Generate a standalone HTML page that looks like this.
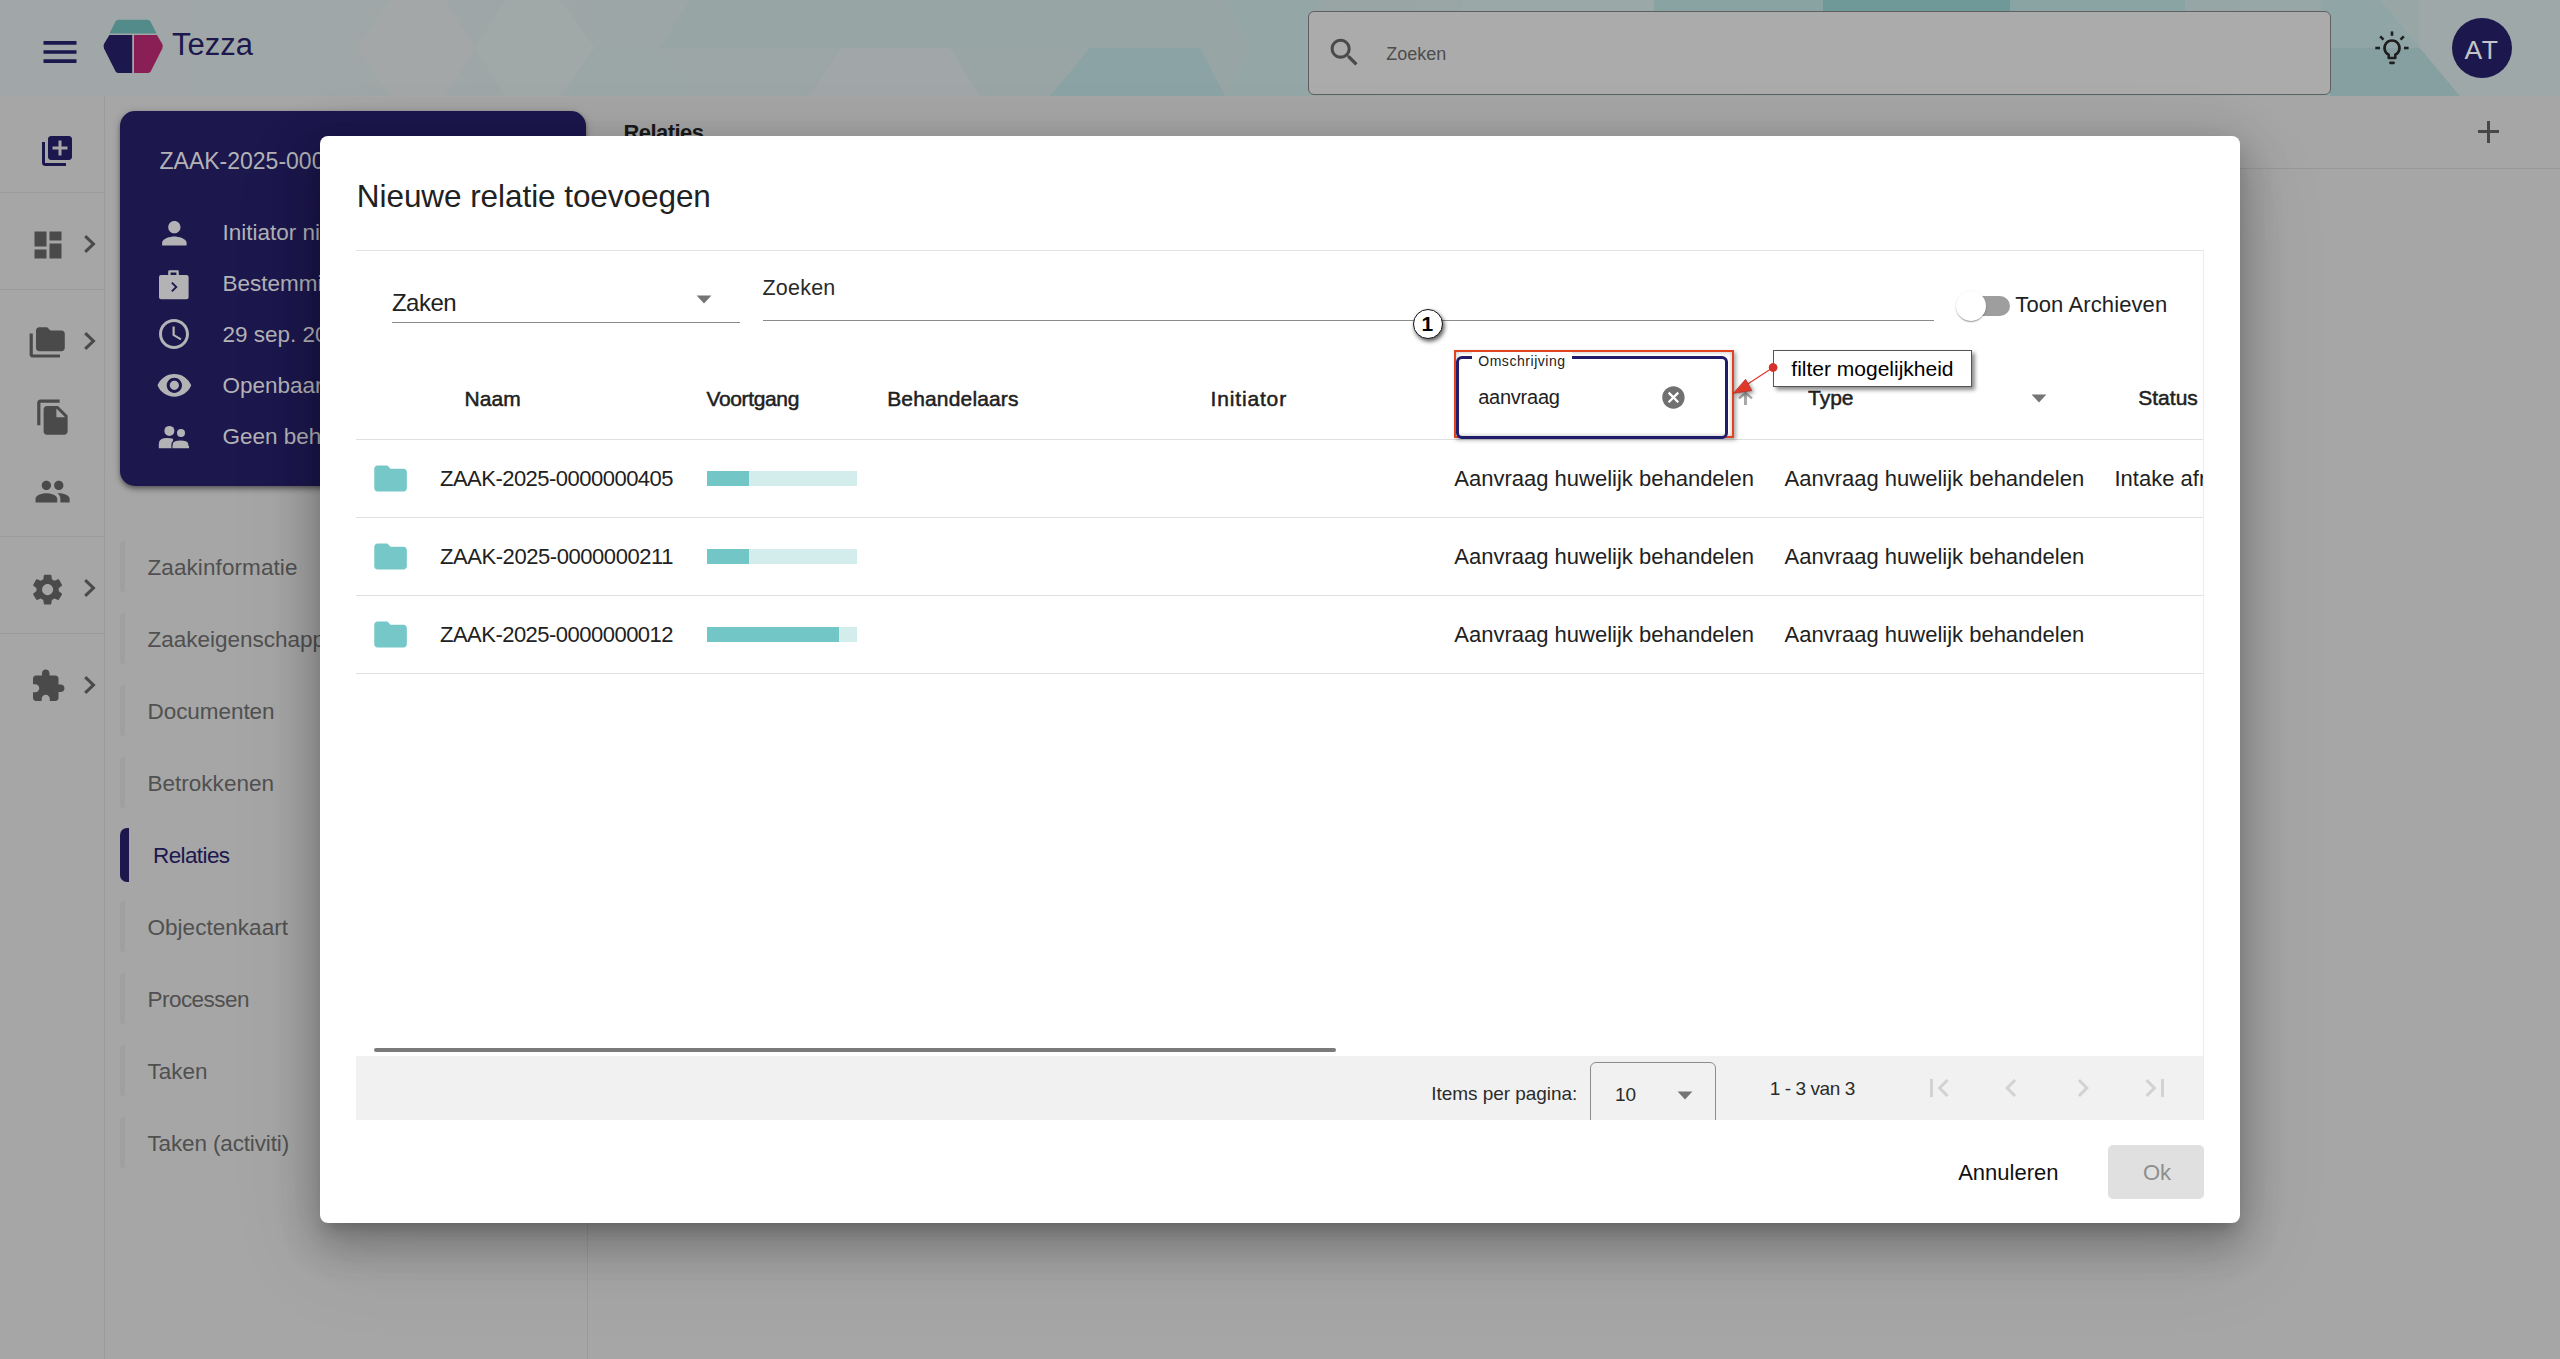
<!DOCTYPE html>
<html><head><meta charset="utf-8">
<style>
*{box-sizing:border-box;margin:0;padding:0}
html,body{width:2560px;height:1359px;overflow:hidden}
body{position:relative;background:#a6a6a6;font-family:"Liberation Sans",sans-serif;color:#212121}
.a{position:absolute}
.t{position:absolute;white-space:nowrap;line-height:1}
.i{position:absolute;overflow:visible}
.l{position:absolute;height:1px}
</style></head>
<body>
<div class="a" style="left:0;top:0;width:2560px;height:96px;overflow:hidden;background:linear-gradient(90deg,#a1a7a8 0%,#9da6a6 25%,#97a5a4 45%,#9aa6a6 60%,#94a5a5 80%,#9ba7a7 100%)"><svg width="2560" height="96" style="position:absolute;left:0;top:0">
<polygon points="690,0 1200,0 1225,48 660,48" fill="#97a5a4"/>
<polygon points="357,48 390,0 445,0 475,48 445,96 390,96" fill="#a3a7a8"/>
<polygon points="475,48 505,0 560,0 595,48 560,96 505,96" fill="#a0a8a8"/>
<polygon points="595,48 660,48 700,96 565,96" fill="#9aa7a6"/>
<polygon points="810,96 840,48 950,48 980,96" fill="#a1a6a8"/>
<polygon points="1050,96 1090,48 1200,48 1225,96" fill="#8ca3a5"/>
<polygon points="1225,0 1320,0 1320,96 1225,96 1250,48" fill="#94a6a5"/>
<polygon points="1462,0 1654,0 1654,20 1462,20" fill="#9aa8a8"/>
<polygon points="1654,0 1823,0 1823,20 1654,20" fill="#89a3a2"/>
<polygon points="1823,0 2010,0 2010,20 1823,20" fill="#6f9898"/>
<polygon points="2010,0 2185,0 2185,20 2010,20" fill="#8aa3a3"/>
<polygon points="2320,0 2380,0 2420,48 2330,48" fill="#90a6a6"/>
<polygon points="2330,48 2420,48 2460,96 2330,96" fill="#86a0a1"/>
<polygon points="2420,0 2560,0 2560,96 2460,96 2420,48" fill="#9ea8a8"/>
</svg></div>
<svg class="i" style="left:37.50px;top:30.20px;width:44.00px;height:44.00px;" viewBox="0 0 24 24"><path fill="#1c174d" d="M3 18h18v-2H3v2zm0-5h18v-2H3v2zm0-7v2h18V6H3z"/></svg>
<svg class="i" style="left:100px;top:16px;width:70px;height:62px" viewBox="100 16 70 62">
<path d="M118.5 19.7 H147.5 Q149.5 19.7 150.5 21.5 L156.6 33.4 H109.4 L115.5 21.5 Q116.5 19.7 118.5 19.7Z" fill="#528b8a"/>
<path d="M109.4 35.1 H132.2 V73 H118 Q116.5 73 115.5 71.3 L104 48.5 Q103 46.3 104 44.1 Z" fill="#1c174d"/>
<path d="M134 35.1 H157 L162.3 44.1 Q163.3 46.3 162.3 48.5 L150.8 71.3 Q149.8 73 148.3 73 H134 Z" fill="#891f54"/>
</svg>
<div class="t" style="left:172.00px;top:28.76px;font-size:31px;color:#1c174d;font-weight:400;">Tezza</div>
<div class="a" style="left:1308px;top:11px;width:1023px;height:84px;border:1px solid #5f5f5f;border-radius:6px;background:#ababab"></div>
<svg class="i" style="left:1326.00px;top:34.40px;width:37.00px;height:37.00px;" viewBox="0 0 24 24"><path fill="#4a4a4a" d="M15.5 14h-.79l-.28-.27C15.41 12.59 16 11.11 16 9.5 16 5.91 13.09 3 9.5 3S3 5.91 3 9.5 5.91 16 9.5 16c1.61 0 3.09-.59 4.23-1.57l.27.28v.79l5 4.99L20.49 19l-4.99-5zm-6 0C7.01 14 5 11.99 5 9.5S7.01 5 9.5 5 14 7.01 14 9.5 11.99 14 9.5 14z"/></svg>
<div class="t" style="left:1386.30px;top:44.76px;font-size:18px;color:#4d4d4d;font-weight:400;">Zoeken</div>
<svg class="i" style="left:2370px;top:26px;width:44px;height:44px" viewBox="0 0 44 44">
<path d="M18.7 32 V28.7 A7.5 7.5 0 1 1 25.3 28.7 V32 Z" stroke="#1e1e1e" stroke-width="2.6" fill="none" stroke-linejoin="round"/>
<rect x="19.1" y="35.6" width="5.8" height="2.6" rx="1.1" fill="#1e1e1e"/>
<g stroke="#1e1e1e" stroke-width="2.6" stroke-linecap="butt">
<line x1="22" y1="5.4" x2="22" y2="9.8"/>
<line x1="5.3" y1="22" x2="10" y2="22"/>
<line x1="34" y1="22" x2="38.6" y2="22"/>
<line x1="10.2" y1="10.4" x2="13.5" y2="13.6"/>
<line x1="33.8" y1="10.4" x2="30.5" y2="13.6"/>
</g></svg>
<div class="a" style="left:2452px;top:18px;width:60px;height:60px;border-radius:50%;background:#1c174d"></div>
<div class="t" style="left:2464.50px;top:36.57px;font-size:26.5px;color:#c3c3c8;font-weight:400;letter-spacing:1.547px;">AT</div>
<div class="a" style="left:104px;top:96px;width:1px;height:1263px;background:#9b9b9b"></div>
<div class="l" style="left:0;top:192px;width:104px;background:#9b9b9b"></div>
<div class="l" style="left:0;top:289px;width:104px;background:#9b9b9b"></div>
<div class="l" style="left:0;top:536px;width:104px;background:#9b9b9b"></div>
<div class="l" style="left:0;top:633px;width:104px;background:#9b9b9b"></div>
<svg class="i" style="left:38.90px;top:133.00px;width:36.00px;height:36.00px;" viewBox="0 0 24 24"><path fill="#1c174d" d="M4 6H2v14c0 1.1.9 2 2 2h14v-2H4V6zm16-4H8c-1.1 0-2 .9-2 2v12c0 1.1.9 2 2 2h12c1.1 0 2-.9 2-2V4c0-1.1-.9-2-2-2zm-1 9h-4v4h-2v-4H9V9h4V5h2v4h4v2z"/></svg>
<svg class="i" style="left:29.90px;top:226.90px;width:36.00px;height:36.00px;" viewBox="0 0 24 24"><path fill="#4a4a4a" d="M3 13h8V3H3v10zm0 8h8v-6H3v6zm10 0h8V11h-8v10zm0-18v6h8V3h-8z"/></svg>
<svg class="i" style="left:80px;top:231.90px;width:20px;height:24px" viewBox="0 0 20 24"><path d="M5.2 4.2 L13.4 12 L5.2 19.8" fill="none" stroke="#4a4a4a" stroke-width="3.1"/></svg>
<svg class="i" style="left:28.30px;top:324.00px;width:38.40px;height:38.40px;" viewBox="0 0 24 24"><path fill="#4a4a4a" d="M3 6H1v13c0 1.1.9 2 2 2h17v-2H3V6zm18-2h-7l-2-2H7c-1.1 0-2 .9-2 2v11c0 1.1.9 2 2 2h14c1.1 0 2-.9 2-2V6c0-1.1-.9-2-2-2z"/></svg>
<svg class="i" style="left:80px;top:328.90px;width:20px;height:24px" viewBox="0 0 20 24"><path d="M5.2 4.2 L13.4 12 L5.2 19.8" fill="none" stroke="#4a4a4a" stroke-width="3.1"/></svg>
<svg class="i" style="left:33.70px;top:397.60px;width:38.40px;height:38.40px;" viewBox="0 0 24 24"><path fill="#4a4a4a" d="M16 1H4c-1.1 0-2 .9-2 2v14h2V3h12V1zm-1 4l6 6v10c0 1.1-.9 2-2 2H7.99C6.89 23 6 22.1 6 21l.01-14c0-1.1.89-2 1.99-2h7zm-1 7h5.5L14 6.5V12z"/></svg>
<svg class="i" style="left:33.60px;top:473.30px;width:37.20px;height:37.20px;" viewBox="0 0 24 24"><path fill="#4a4a4a" d="M16 11c1.66 0 2.99-1.34 2.99-3S17.66 5 16 5c-1.66 0-3 1.34-3 3s1.34 3 3 3zm-8 0c1.66 0 2.99-1.34 2.99-3S9.66 5 8 5C6.34 5 5 6.34 5 8s1.34 3 3 3zm0 2c-2.33 0-7 1.17-7 3.5V19h14v-2.5c0-2.33-4.67-3.5-7-3.5zm8 0c-.29 0-.62.02-.97.05 1.16.84 1.97 1.97 1.97 3.45V19h6v-2.5c0-2.33-4.67-3.5-7-3.5z"/></svg>
<svg class="i" style="left:28.60px;top:570.80px;width:37.20px;height:37.20px;" viewBox="0 0 24 24"><path fill="#4a4a4a" d="M19.14 12.94c.04-.3.06-.61.06-.94 0-.32-.02-.64-.07-.94l2.03-1.58c.18-.14.23-.41.12-.61l-1.92-3.32c-.12-.22-.37-.29-.59-.22l-2.39.96c-.5-.38-1.03-.7-1.62-.94l-.36-2.54c-.04-.24-.24-.41-.48-.41h-3.84c-.24 0-.43.17-.47.41l-.36 2.54c-.59.24-1.13.57-1.62.94l-2.39-.96c-.22-.08-.47 0-.59.22L2.74 8.87c-.12.21-.08.47.12.61l2.03 1.58c-.05.3-.09.63-.09.94s.02.64.07.94l-2.03 1.58c-.18.14-.23.41-.12.61l1.92 3.32c.12.22.37.29.59.22l2.39-.96c.5.38 1.03.7 1.62.94l.36 2.54c.05.24.24.41.48.41h3.84c.24 0 .44-.17.47-.41l.36-2.54c.59-.24 1.13-.56 1.62-.94l2.39.96c.22.08.47 0 .59-.22l1.92-3.32c.12-.22.07-.47-.12-.61l-2.01-1.58zM12 15.6c-1.98 0-3.6-1.62-3.6-3.6s1.62-3.6 3.6-3.6 3.6 1.62 3.6 3.6-1.62 3.6-3.6 3.6z"/></svg>
<svg class="i" style="left:80px;top:575.50px;width:20px;height:24px" viewBox="0 0 20 24"><path d="M5.2 4.2 L13.4 12 L5.2 19.8" fill="none" stroke="#4a4a4a" stroke-width="3.1"/></svg>
<svg class="i" style="left:29.80px;top:667.80px;width:36.00px;height:36.00px;" viewBox="0 0 24 24"><path fill="#4a4a4a" d="M20.5 11H19V7c0-1.1-.9-2-2-2h-4V3.5C13 2.12 11.88 1 10.5 1S8 2.12 8 3.5V5H4c-1.1 0-1.99.9-1.99 2v3.8H3.5c1.49 0 2.7 1.21 2.7 2.7s-1.21 2.7-2.7 2.7H2V20c0 1.1.9 2 2 2h3.8v-1.5c0-1.49 1.21-2.7 2.7-2.7 1.49 0 2.7 1.21 2.7 2.7V22H17c1.1 0 2-.9 2-2v-4h1.5c1.38 0 2.5-1.12 2.5-2.5S21.88 11 20.5 11z"/></svg>
<svg class="i" style="left:80px;top:672.50px;width:20px;height:24px" viewBox="0 0 20 24"><path d="M5.2 4.2 L13.4 12 L5.2 19.8" fill="none" stroke="#4a4a4a" stroke-width="3.1"/></svg>
<div class="a" style="left:120px;top:540px;width:5px;height:53px;background:#a0a0a0;border-radius:6px 0 0 6px"></div>
<div class="t" style="left:147.50px;top:556.95px;font-size:22.5px;color:#505050;font-weight:400;letter-spacing:0.085px;">Zaakinformatie</div>
<div class="a" style="left:120px;top:612px;width:5px;height:53px;background:#a0a0a0;border-radius:6px 0 0 6px"></div>
<div class="t" style="left:147.50px;top:628.95px;font-size:22.5px;color:#505050;font-weight:400;">Zaakeigenschappen</div>
<div class="a" style="left:120px;top:684px;width:5px;height:53px;background:#a0a0a0;border-radius:6px 0 0 6px"></div>
<div class="t" style="left:147.50px;top:700.95px;font-size:22.5px;color:#505050;font-weight:400;letter-spacing:-0.058px;">Documenten</div>
<div class="a" style="left:120px;top:756px;width:5px;height:53px;background:#a0a0a0;border-radius:6px 0 0 6px"></div>
<div class="t" style="left:147.50px;top:772.95px;font-size:22.5px;color:#505050;font-weight:400;letter-spacing:0.014px;">Betrokkenen</div>
<div class="a" style="left:120px;top:828px;width:9px;height:54px;background:#1c174d;border-radius:7px 0 0 7px"></div>
<div class="t" style="left:153.00px;top:844.95px;font-size:22.5px;color:#1c174d;font-weight:400;letter-spacing:-0.600px;">Relaties</div>
<div class="a" style="left:120px;top:900px;width:5px;height:53px;background:#a0a0a0;border-radius:6px 0 0 6px"></div>
<div class="t" style="left:147.50px;top:916.95px;font-size:22.5px;color:#505050;font-weight:400;letter-spacing:0.032px;">Objectenkaart</div>
<div class="a" style="left:120px;top:972px;width:5px;height:53px;background:#a0a0a0;border-radius:6px 0 0 6px"></div>
<div class="t" style="left:147.50px;top:988.95px;font-size:22.5px;color:#505050;font-weight:400;letter-spacing:-0.535px;">Processen</div>
<div class="a" style="left:120px;top:1044px;width:5px;height:53px;background:#a0a0a0;border-radius:6px 0 0 6px"></div>
<div class="t" style="left:147.50px;top:1060.95px;font-size:22.5px;color:#505050;font-weight:400;letter-spacing:-0.009px;">Taken</div>
<div class="a" style="left:120px;top:1116px;width:5px;height:53px;background:#a0a0a0;border-radius:6px 0 0 6px"></div>
<div class="t" style="left:147.50px;top:1132.95px;font-size:22.5px;color:#505050;font-weight:400;letter-spacing:-0.144px;">Taken (activiti)</div>
<div class="a" style="left:587px;top:169px;width:1px;height:1190px;background:#9b9b9b"></div>
<div class="l" style="left:587px;top:168px;width:1973px;background:#999"></div>
<div class="t" style="left:623.50px;top:122.38px;font-size:22px;color:#1a1a1a;font-weight:700;letter-spacing:-0.549px;">Relaties</div>
<div class="a" style="left:2477.5px;top:130.3px;width:21.5px;height:2.8px;background:#474747"></div><div class="a" style="left:2486.8px;top:121px;width:2.8px;height:21.5px;background:#474747"></div>
<div class="a" style="left:120px;top:111px;width:466px;height:375px;background:#1c174d;border-radius:15px;box-shadow:0 2px 4px -1px rgba(0,0,0,.3),0 4px 5px 0 rgba(0,0,0,.2),0 1px 10px 0 rgba(0,0,0,.15)"></div>
<div class="t" style="left:159.50px;top:149.73px;font-size:23px;color:#b3b3b6;font-weight:400;">ZAAK-2025-0000000405</div>
<div class="t" style="left:222.50px;top:222.25px;font-size:22.5px;color:#b3b3b6;font-weight:400;">Initiator niet bekend</div>
<div class="t" style="left:222.50px;top:273.05px;font-size:22.5px;color:#b3b3b6;font-weight:400;">Bestemming onbekend</div>
<div class="t" style="left:222.50px;top:323.95px;font-size:22.5px;color:#b3b3b6;font-weight:400;">29 sep. 2025</div>
<div class="t" style="left:222.50px;top:374.85px;font-size:22.5px;color:#b3b3b6;font-weight:400;">Openbaar</div>
<div class="t" style="left:222.50px;top:425.75px;font-size:22.5px;color:#b3b3b6;font-weight:400;">Geen behandelaar</div>
<svg class="i" style="left:155.70px;top:214.70px;width:36.72px;height:36.72px;" viewBox="0 0 24 24"><path fill="#b3b3b6" d="M12 12c2.21 0 4-1.79 4-4s-1.79-4-4-4-4 1.79-4 4 1.79 4 4 4zm0 2c-2.67 0-8 1.34-8 4v2h16v-2c0-2.66-5.33-4-8-4z"/></svg>
<svg class="i" style="left:158px;top:269px;width:32px;height:32px" viewBox="0 0 32 32">
<path fill="#b3b3b6" fill-rule="evenodd" d="M11.5 1.3 H19.5 Q20.8 1.3 20.8 2.6 V6 H28.6 Q30.6 6 30.6 8 V28.3 Q30.6 30.3 28.6 30.3 H3 Q1 30.3 1 28.3 V8 Q1 6 3 6 H10.2 V2.6 Q10.2 1.3 11.5 1.3Z M12.6 3.5 V6 H18.4 V3.5Z M13.2 14.2 L14.5 12.9 L19.6 18 L14.5 23.1 L13.2 21.8 L17 18Z"/>
</svg>
<svg class="i" style="left:156.00px;top:316.40px;width:36.00px;height:36.00px;" viewBox="0 0 24 24"><path fill="#b3b3b6" d="M11.99 2C6.47 2 2 6.48 2 12s4.47 10 9.99 10C17.52 22 22 17.52 22 12S17.52 2 11.99 2zM12 20c-4.42 0-8-3.58-8-8s3.58-8 8-8 8 3.58 8 8-3.58 8-8 8zm.5-13H11v6l5.25 3.15.75-1.23-4.5-2.67z"/></svg>
<svg class="i" style="left:155.50px;top:367.10px;width:36.72px;height:36.72px;" viewBox="0 0 24 24"><path fill="#b3b3b6" d="M12 4.5C7 4.5 2.73 7.61 1 12c1.73 4.39 6 7.5 11 7.5s9.27-3.11 11-7.5c-1.73-4.39-6-7.5-11-7.5zM12 17c-2.76 0-5-2.24-5-5s2.24-5 5-5 5 2.24 5 5-2.24 5-5 5zm0-8c-1.66 0-3 1.34-3 3s1.34 3 3 3 3-1.34 3-3-1.34-3-3-3z"/></svg>
<svg class="i" style="left:150px;top:420px;width:45px;height:32px" viewBox="150 420 45 32">
<circle cx="169.4" cy="430.9" r="5" fill="#b3b3b6"/>
<circle cx="181" cy="433.1" r="4" fill="#b3b3b6"/>
<path d="M158.8 448.2 V444 Q158.8 438.1 167 438.1 Q170.5 438.1 173 438.8 L173 448.2Z" fill="#b3b3b6"/>
<path d="M172 448.2 V444.4 Q172 439.8 180.5 439.8 Q189 439.8 189 444.4 V448.2 Z" fill="#b3b3b6" stroke="#1c174d" stroke-width="1.3"/>
<rect x="172.6" y="446" width="16.4" height="2.2" fill="#b3b3b6"/>
</svg>
<div class="a" style="left:320px;top:136px;width:1920px;height:1087px;background:#fff;border-radius:8px;box-shadow:0 11px 15px -7px rgba(0,0,0,.2),0 24px 38px 3px rgba(0,0,0,.14),0 9px 46px 8px rgba(0,0,0,.12),0 30px 90px 10px rgba(0,0,0,.08)"></div>
<div class="t" style="left:356.80px;top:180.94px;font-size:31.5px;color:#212121;font-weight:400;letter-spacing:-0.062px;">Nieuwe relatie toevoegen</div>
<div class="l" style="left:356px;top:250px;width:1847px;background:#e3e3e3"></div>
<div class="a" style="left:2203px;top:250px;width:1px;height:870px;background:#ececec"></div>
<div class="t" style="left:392.00px;top:290.68px;font-size:24px;color:#212121;font-weight:400;letter-spacing:-0.541px;">Zaken</div>
<div class="l" style="left:392px;top:322px;width:348px;background:#8a8a8a"></div>
<svg class="i" style="left:696px;top:295px;width:16px;height:9px" viewBox="0 0 16 9"><path d="M0.6 0.6 H15.4 L8 8.5Z" fill="#757575"/></svg>
<div class="t" style="left:762.50px;top:277.80px;font-size:21.5px;color:#2a2a2a;font-weight:400;letter-spacing:0.214px;">Zoeken</div>
<div class="l" style="left:763px;top:320px;width:1171px;background:#8a8a8a"></div>
<div class="a" style="left:1962px;top:295.5px;width:48px;height:20.5px;border-radius:10px;background:#9e9e9e"></div>
<div class="a" style="left:1956px;top:290.6px;width:30px;height:30px;border-radius:50%;background:#fff;box-shadow:0 2px 1px -1px rgba(0,0,0,.2),0 1px 1px 0 rgba(0,0,0,.14),0 1px 3px 0 rgba(0,0,0,.12)"></div>
<div class="t" style="left:2015.30px;top:294.38px;font-size:22px;color:#212121;font-weight:400;letter-spacing:0.112px;">Toon Archieven</div>
<div class="t" style="left:464.50px;top:387.82px;font-size:21px;color:#212121;font-weight:400;letter-spacing:0.117px;-webkit-text-stroke:0.5px #212121;">Naam</div>
<div class="t" style="left:706.50px;top:387.82px;font-size:21px;color:#212121;font-weight:400;letter-spacing:-0.363px;-webkit-text-stroke:0.5px #212121;">Voortgang</div>
<div class="t" style="left:887.20px;top:387.82px;font-size:21px;color:#212121;font-weight:400;letter-spacing:0.158px;-webkit-text-stroke:0.5px #212121;">Behandelaars</div>
<div class="t" style="left:1210.50px;top:387.82px;font-size:21px;color:#212121;font-weight:400;letter-spacing:0.847px;-webkit-text-stroke:0.5px #212121;">Initiator</div>
<div class="t" style="left:1808.00px;top:387.02px;font-size:21px;color:#212121;font-weight:400;letter-spacing:-0.008px;-webkit-text-stroke:0.5px #212121;">Type</div>
<div class="t" style="left:2138.20px;top:386.82px;font-size:21px;color:#212121;font-weight:400;letter-spacing:0.026px;-webkit-text-stroke:0.5px #212121;">Status</div>
<svg class="i" style="left:2031px;top:393.5px;width:16px;height:9px" viewBox="0 0 16 9"><path d="M0.6 0.6 H15.4 L8 8.5Z" fill="#757575"/></svg>
<div class="l" style="left:356px;top:439px;width:1847px;background:#e0e0e0"></div>
<svg class="i" style="left:1736px;top:390px;width:18px;height:16px" viewBox="0 0 18 16"><path d="M9.5 1.5 L2.2 7.5 L3.8 9.3 L8 5.8 V15 H11 V5.8 L15.2 9.3 L16.8 7.5Z" fill="#a8a8a8"/></svg>
<svg class="i" style="left:370.90px;top:458.90px;width:39.12px;height:39.12px;" viewBox="0 0 24 24"><path fill="#76c8c8" d="M10 4H4c-1.1 0-1.99.9-1.99 2L2 18c0 1.1.9 2 2 2h16c1.1 0 2-.9 2-2V8c0-1.1-.9-2-2-2h-8l-2-2z"/></svg>
<div class="t" style="left:440.00px;top:467.68px;font-size:22px;color:#212121;font-weight:400;letter-spacing:-0.521px;">ZAAK-2025-0000000405</div>
<div class="a" style="left:707px;top:471px;width:150px;height:15px;background:#d3eded"></div>
<div class="a" style="left:707px;top:471px;width:42px;height:15px;background:#73c6c6"></div>
<div class="t" style="left:1454.30px;top:467.68px;font-size:22px;color:#212121;font-weight:400;">Aanvraag huwelijk behandelen</div>
<div class="t" style="left:1784.50px;top:467.68px;font-size:22px;color:#212121;font-weight:400;">Aanvraag huwelijk behandelen</div>
<div class="a" style="left:2114px;top:460px;width:89px;height:40px;overflow:hidden"><div class="t" style="left:0.50px;top:7.68px;font-size:22px;color:#212121;font-weight:400;">Intake afronden</div>
</div>
<div class="l" style="left:356px;top:517px;width:1847px;background:#e0e0e0"></div>
<svg class="i" style="left:370.90px;top:536.90px;width:39.12px;height:39.12px;" viewBox="0 0 24 24"><path fill="#76c8c8" d="M10 4H4c-1.1 0-1.99.9-1.99 2L2 18c0 1.1.9 2 2 2h16c1.1 0 2-.9 2-2V8c0-1.1-.9-2-2-2h-8l-2-2z"/></svg>
<div class="t" style="left:440.00px;top:545.68px;font-size:22px;color:#212121;font-weight:400;letter-spacing:-0.439px;">ZAAK-2025-0000000211</div>
<div class="a" style="left:707px;top:549px;width:150px;height:15px;background:#d3eded"></div>
<div class="a" style="left:707px;top:549px;width:42px;height:15px;background:#73c6c6"></div>
<div class="t" style="left:1454.30px;top:545.68px;font-size:22px;color:#212121;font-weight:400;">Aanvraag huwelijk behandelen</div>
<div class="t" style="left:1784.50px;top:545.68px;font-size:22px;color:#212121;font-weight:400;">Aanvraag huwelijk behandelen</div>
<div class="l" style="left:356px;top:595px;width:1847px;background:#e0e0e0"></div>
<svg class="i" style="left:370.90px;top:614.90px;width:39.12px;height:39.12px;" viewBox="0 0 24 24"><path fill="#76c8c8" d="M10 4H4c-1.1 0-1.99.9-1.99 2L2 18c0 1.1.9 2 2 2h16c1.1 0 2-.9 2-2V8c0-1.1-.9-2-2-2h-8l-2-2z"/></svg>
<div class="t" style="left:440.00px;top:623.68px;font-size:22px;color:#212121;font-weight:400;letter-spacing:-0.521px;">ZAAK-2025-0000000012</div>
<div class="a" style="left:707px;top:627px;width:150px;height:15px;background:#d3eded"></div>
<div class="a" style="left:707px;top:627px;width:132px;height:15px;background:#73c6c6"></div>
<div class="t" style="left:1454.30px;top:623.68px;font-size:22px;color:#212121;font-weight:400;">Aanvraag huwelijk behandelen</div>
<div class="t" style="left:1784.50px;top:623.68px;font-size:22px;color:#212121;font-weight:400;">Aanvraag huwelijk behandelen</div>
<div class="l" style="left:356px;top:673px;width:1847px;background:#e0e0e0"></div>
<div class="a" style="left:1453.5px;top:349.5px;width:280px;height:88px;border:2px solid #e2431f;box-shadow:2px 2px 4px rgba(0,0,0,.35),inset 0 0 4px rgba(0,0,0,.28)"></div>
<div class="a" style="left:1456px;top:356px;width:271.5px;height:83px;border:3px solid #201c6a;border-radius:6px"></div>
<div class="a" style="left:1471.5px;top:352px;width:100px;height:8px;background:#fff"></div>
<div class="t" style="left:1478.20px;top:354.15px;font-size:14px;color:#212121;font-weight:400;letter-spacing:0.549px;">Omschrijving</div>
<div class="t" style="left:1478.20px;top:387.07px;font-size:20px;color:#212121;font-weight:400;letter-spacing:-0.238px;">aanvraag</div>
<svg class="i" style="left:1659.80px;top:383.80px;width:26.88px;height:26.88px;" viewBox="0 0 24 24"><path fill="#707070" d="M12 2C6.47 2 2 6.47 2 12s4.47 10 10 10 10-4.47 10-10S17.53 2 12 2zm5 13.59L15.59 17 12 13.41 8.41 17 7 15.59 10.59 12 7 8.41 8.41 7 12 10.59 15.59 7 17 8.41 13.41 12 17 15.59z"/></svg>
<svg class="i" style="left:1720px;top:355px;width:60px;height:45px" viewBox="1720 355 60 45">
<line x1="1773" y1="367.5" x2="1747" y2="384.5" stroke="#e0352b" stroke-width="1.1"/>
<path d="M1733.2 393.5 L1745.6 379.3 L1751.8 390.6Z" fill="#e0392b" stroke="#a82018" stroke-width="0.6" style="filter:drop-shadow(2px 2px 2px rgba(0,0,0,.45))"/>
<circle cx="1773.2" cy="367.5" r="4.3" fill="#d8302a"/>
</svg>
<div class="a" style="left:1773px;top:350px;width:199px;height:37px;background:#fff;border:1px solid #555;box-shadow:3px 3px 4px rgba(0,0,0,.45)"></div>
<div class="t" style="left:1791.30px;top:358.02px;font-size:21px;color:#000;font-weight:400;">filter mogelijkheid</div>
<svg class="i" style="left:1768px;top:362px;width:12px;height:12px" viewBox="1768 362 12 12"><circle cx="1773.2" cy="367.5" r="4.3" fill="#d8302a"/></svg>
<div class="a" style="left:1413px;top:308.5px;width:30px;height:30px;border-radius:50%;background:#fff;border:1.6px solid #111;box-shadow:1.5px 2.5px 4px rgba(0,0,0,.65)"></div>
<div class="t" style="left:1421.50px;top:313.22px;font-size:21px;color:#000;font-weight:700;">1</div>
<div class="a" style="left:374px;top:1048px;width:962px;height:4px;border-radius:2px;background:#7a7a7a"></div>
<div class="a" style="left:356px;top:1056px;width:1847px;height:64px;background:#f1f1f1;overflow:hidden"><div class="a" style="left:1233.8px;top:6px;width:126.5px;height:80px;border:1px solid #8c8c8c;border-radius:6px"></div></div>
<div class="t" style="left:1431.20px;top:1084.22px;font-size:19px;color:#2b2b2b;font-weight:400;letter-spacing:-0.048px;">Items per pagina:</div>
<div class="t" style="left:1615.00px;top:1084.52px;font-size:19px;color:#2b2b2b;font-weight:400;">10</div>
<svg class="i" style="left:1677px;top:1090.5px;width:16px;height:9px" viewBox="0 0 16 9"><path d="M0.6 0.6 H15.4 L8 8.5Z" fill="#757575"/></svg>
<div class="t" style="left:1769.80px;top:1078.92px;font-size:19px;color:#2b2b2b;font-weight:400;letter-spacing:-0.435px;">1 - 3 van 3</div>
<svg class="i" style="left:1921.00px;top:1070.00px;width:36.00px;height:36.00px;" viewBox="0 0 24 24"><path fill="#d2d2d2" d="M18.41 16.59L13.82 12l4.59-4.59L17 6l-6 6 6 6zM6 6h2v12H6z"/></svg>
<svg class="i" style="left:1993.00px;top:1070.00px;width:36.00px;height:36.00px;" viewBox="0 0 24 24"><path fill="#d2d2d2" d="M15.41 7.41L14 6l-6 6 6 6 1.41-1.41L10.83 12z"/></svg>
<svg class="i" style="left:2065.00px;top:1070.00px;width:36.00px;height:36.00px;" viewBox="0 0 24 24"><path fill="#d2d2d2" d="M10 6L8.59 7.41 13.17 12l-4.58 4.59L10 18l6-6z"/></svg>
<svg class="i" style="left:2137.00px;top:1070.00px;width:36.00px;height:36.00px;" viewBox="0 0 24 24"><path fill="#d2d2d2" d="M5.59 7.41L10.18 12l-4.59 4.59L7 18l6-6-6-6zM16 6h2v12h-2z"/></svg>
<div class="t" style="left:1958.20px;top:1161.58px;font-size:22px;color:#111;font-weight:400;">Annuleren</div>
<div class="a" style="left:2108px;top:1145px;width:96px;height:54px;border-radius:5px;background:#e0e0e0"></div>
<div class="t" style="left:2143.00px;top:1161.58px;font-size:22px;color:#8e8e8e;font-weight:400;">Ok</div>
</body></html>
